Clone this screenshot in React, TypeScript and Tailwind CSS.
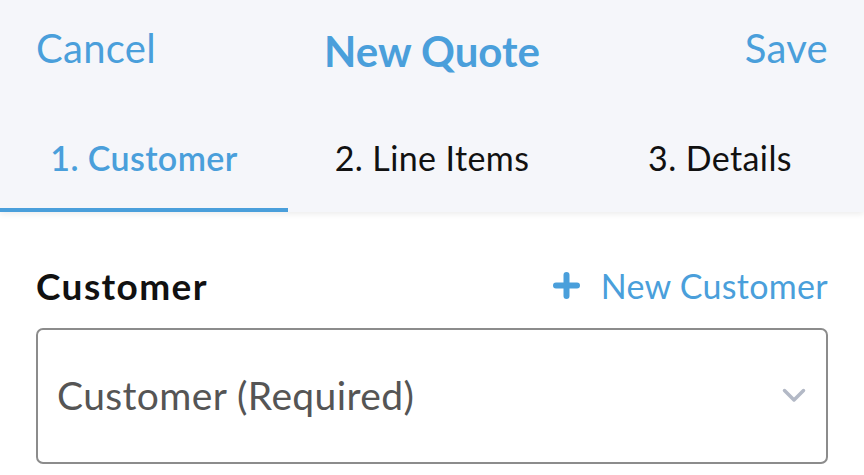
const tabs = [
  { label: "1. Customer", active: true },
  { label: "2. Line Items", active: false },
  { label: "3. Details", active: false },
];

export default function App() {
  return (
    <div className="h-[475px] w-[864px] overflow-hidden bg-white font-['Lato',sans-serif]">
      <header className="relative z-10 bg-[#f5f6fa] shadow-[0_2px_6px_rgba(0,0,0,0.08)]">
        <div className="grid h-[100px] grid-cols-[1fr_auto_1fr] items-center px-[36px] pb-[4px]">
          <button className="justify-self-start text-[40px] tracking-[0.3px] text-[#4a9fdb]">
            Cancel
          </button>
          <h1 className="pt-[7px] text-[42px] font-bold text-[#4a9fdb]">New Quote</h1>
          <button className="justify-self-end text-[40px] tracking-[0.3px] text-[#4a9fdb]">
            Save
          </button>
        </div>
        <nav className="grid grid-cols-3">
          {tabs.map((tab) => (
            <div
              key={tab.label}
              className={`flex h-[112px] items-center justify-center border-b-4 pt-[7px] text-[34px] tracking-[0.4px] ${
                tab.active
                  ? "border-[#4a9fdb] font-semibold text-[#4a9fdb]"
                  : "border-transparent text-[#111]"
              }`}
            >
              {tab.label}
            </div>
          ))}
        </nav>
      </header>

      <main className="px-[36px] pt-[46px]">
        <div className="flex items-center justify-between">
          <h2 className="text-[37px] font-bold tracking-[1.4px] text-[#111]">Customer</h2>
          <button className="flex items-center gap-[21px] text-[34px] tracking-[0.3px] text-[#4a9fdb]">
            <svg width="27" height="27" viewBox="0 0 27 27" fill="none">
              <path
                d="M13.5 3v21M3 13.5h21"
                stroke="#4a9fdb"
                strokeWidth="6"
                strokeLinecap="round"
              />
            </svg>
            New Customer
          </button>
        </div>
        <div className="mt-[14px] flex h-[136px] items-center justify-between rounded-[7px] border-2 border-[#8c8c8c] pl-[19px] pr-[20px]">
          <span className="text-[39px] tracking-[0.4px] text-[#555]">Customer (Required)</span>
          <svg width="24" height="15" viewBox="0 0 24 15" fill="none">
            <path
              d="M2.5 2.5l9.5 9.5 9.5-9.5"
              stroke="#b3b9c6"
              strokeWidth="3.5"
              strokeLinecap="round"
              strokeLinejoin="round"
            />
          </svg>
        </div>
      </main>
    </div>
  );
}
